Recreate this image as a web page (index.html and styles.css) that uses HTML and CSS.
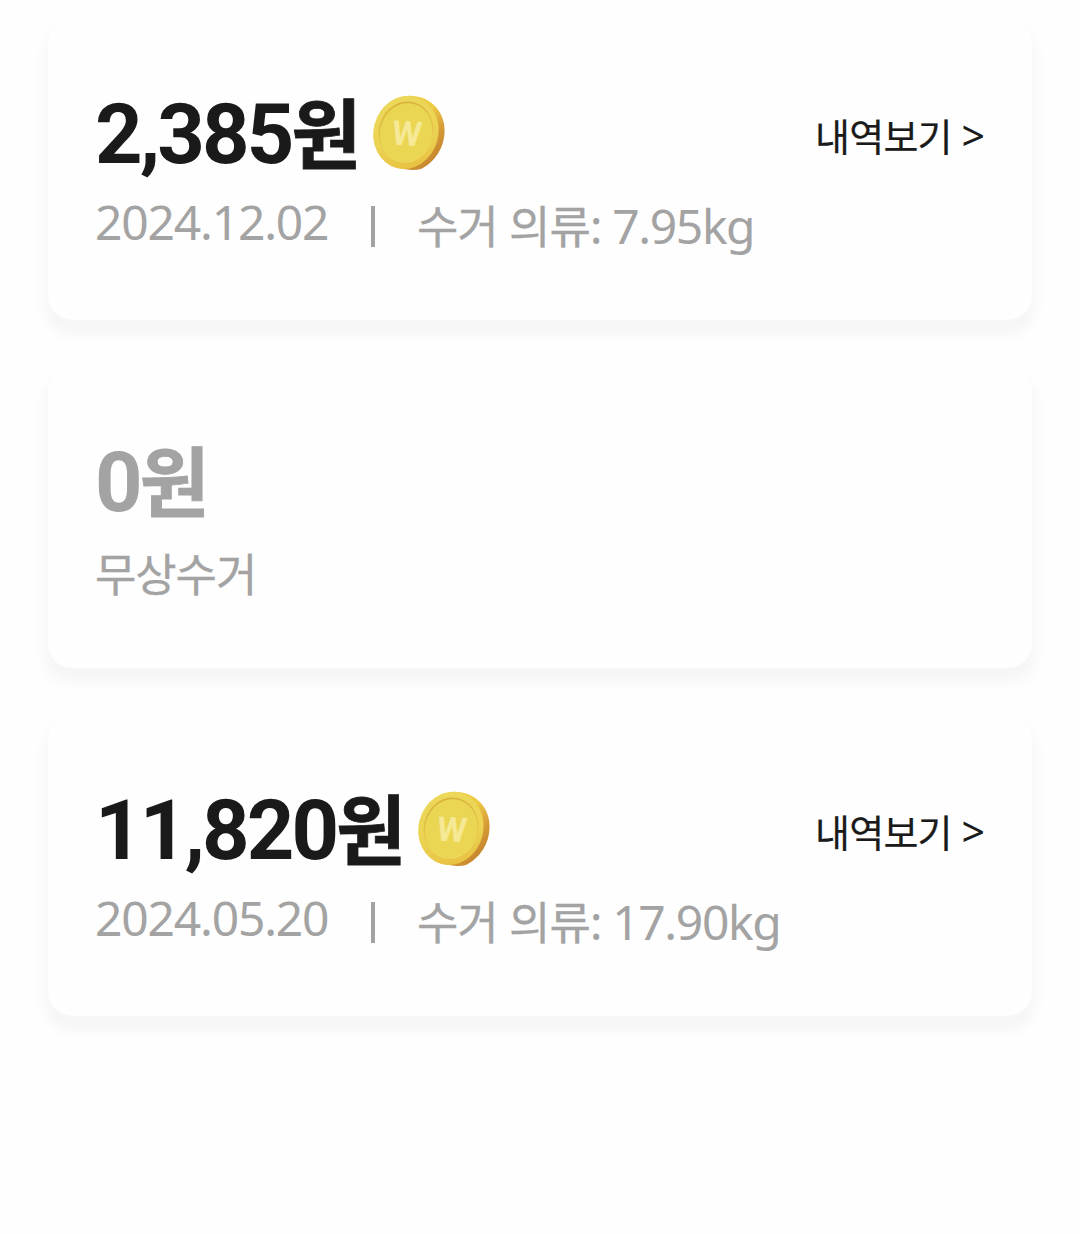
FILE: index.html
```html
<!DOCTYPE html>
<html lang="ko">
<head>
<meta charset="utf-8">
<title>수거 내역</title>
<link rel="stylesheet" href="styles.css">
</head>
<body>
<svg class="defs" aria-hidden="true">
  <defs>
    <linearGradient id="edge" x1="0.2" y1="0" x2="0.85" y2="1">
      <stop offset="0.35" stop-color="#edcb45"/>
      <stop offset="0.65" stop-color="#d69a35"/>
      <stop offset="1" stop-color="#bd7a2d"/>
    </linearGradient>
    <linearGradient id="rim" x1="0.2" y1="0" x2="0.7" y2="1">
      <stop offset="0" stop-color="#ecd85a"/>
      <stop offset="0.6" stop-color="#ecd252"/>
      <stop offset="1" stop-color="#e8c141"/>
    </linearGradient>
    <linearGradient id="inset" x1="0.3" y1="0" x2="0.7" y2="1">
      <stop offset="0" stop-color="#d9b23b"/>
      <stop offset="0.5" stop-color="#e2c348"/>
      <stop offset="1" stop-color="#f2e16c"/>
    </linearGradient>
  </defs>
  <symbol id="coin" viewBox="0 0 72 76">
    <path d="M36 .8C53 1 67 10 71 29C74 48 64 66 48 74C41 76 32 75 25 72Z" fill="url(#edge)"/>
    <ellipse cx="33" cy="37.4" rx="32.4" ry="36.8" transform="rotate(15 33 37)" fill="url(#rim)"/>
    <ellipse cx="33" cy="37" rx="27.2" ry="30.8" transform="rotate(15 33 37)" fill="url(#inset)"/>
    <ellipse cx="33.3" cy="37.5" rx="26" ry="29.6" transform="rotate(15 33 37)" fill="#ead653"/>
  </symbol>
</svg>
<main class="list">
  <article class="card">
    <div class="top">
      <h2 class="amount">2,385<span class="won">원</span></h2>
      <svg class="coin" viewBox="0 0 72 76"><use href="#coin"/><text class="coin-letter" transform="matrix(1 .06 -.12 1 32.3 50.3)" text-anchor="middle">W</text></svg>
      <a class="more">내역보기 <span class="arrow">&gt;</span></a>
    </div>
    <div class="meta">
      <span class="date">2024.12.02</span>
      <span class="bar"></span>
      <span class="weight">수거 의류<span class="kg">: 7.95kg</span></span>
    </div>
  </article>
  <article class="card muted">
    <div class="top">
      <h2 class="amount">0<span class="won">원</span></h2>
    </div>
    <div class="meta"><span class="weight">무상수거</span></div>
  </article>
  <article class="card">
    <div class="top">
      <h2 class="amount">11,820<span class="won">원</span></h2>
      <svg class="coin" viewBox="0 0 72 76"><use href="#coin"/><text class="coin-letter" transform="matrix(1 .06 -.12 1 32.3 50.3)" text-anchor="middle">W</text></svg>
      <a class="more">내역보기 <span class="arrow">&gt;</span></a>
    </div>
    <div class="meta">
      <span class="date">2024.05.20</span>
      <span class="bar"></span>
      <span class="weight">수거 의류<span class="kg">: 17.90kg</span></span>
    </div>
  </article>
</main>
</body>
</html>
```
FILE: styles.css
```css
* { box-sizing: border-box; }
body {
  margin: 0;
  background: #fefefe;
  color: #1a1a1a;
  font-family: "Noto Sans", "Noto Sans CJK KR", sans-serif;
}
.defs { position: absolute; width: 0; height: 0; }
.list {
  display: flex;
  flex-direction: column;
  gap: 48px;
  padding: 20px 48px;
}
.card {
  height: 300px;
  padding: 64px 47px 0 47px;
  border-radius: 24px;
  background: #fefefe;
  box-shadow: 0 11px 13px 4px rgba(0, 0, 0, 0.034);
}
.top { display: flex; height: 100px; align-items: flex-start; }
.amount {
  margin: 1px 0 0;
  font: 700 83px/100px Roboto, "Noto Sans CJK KR", sans-serif;
  letter-spacing: -2.9px;
  white-space: nowrap;
}
.won { font-family: "Noto Sans CJK KR", sans-serif; font-size: 76px; line-height: 0; letter-spacing: -3.2px; -webkit-text-stroke: 0.8px currentColor; }
.coin { width: 72px; height: 76px; margin: 11px 0 0 15px; }
.coin-letter { font: 700 34px Roboto, sans-serif; fill: #f6e996; }
.more {
  margin: 21px 0 0 auto;
  font: 400 38px/60px "Noto Sans CJK KR", sans-serif;
  letter-spacing: -0.8px;
  -webkit-text-stroke: 0.2px currentColor;
  white-space: nowrap;
}
.arrow { font-family: "Noto Sans", sans-serif; font-size: 41px; line-height: 0; letter-spacing: 0; -webkit-text-stroke: 0; }
.meta {
  display: flex;
  height: 72px;
  color: #a3a3a3;
  font-size: 48px;
  line-height: 76px;
  white-space: nowrap;
}
.date { width: 276px; letter-spacing: -1.2px; }
.bar { width: 4px; height: 41px; margin-top: 22px; background: #a3a3a3; }
.weight {
  margin-left: 42px;
  font-family: "Noto Sans CJK KR", sans-serif;
  font-size: 45px;
  line-height: 82px;
  letter-spacing: -1.1px;
  -webkit-text-stroke: 0.3px currentColor;
}
.kg { font-family: "Noto Sans", sans-serif; font-size: 48px; line-height: 0; letter-spacing: -1.4px; -webkit-text-stroke: 0; }
.muted .amount { color: #a3a3a3; }
.muted .weight { margin-left: 0; }
```
